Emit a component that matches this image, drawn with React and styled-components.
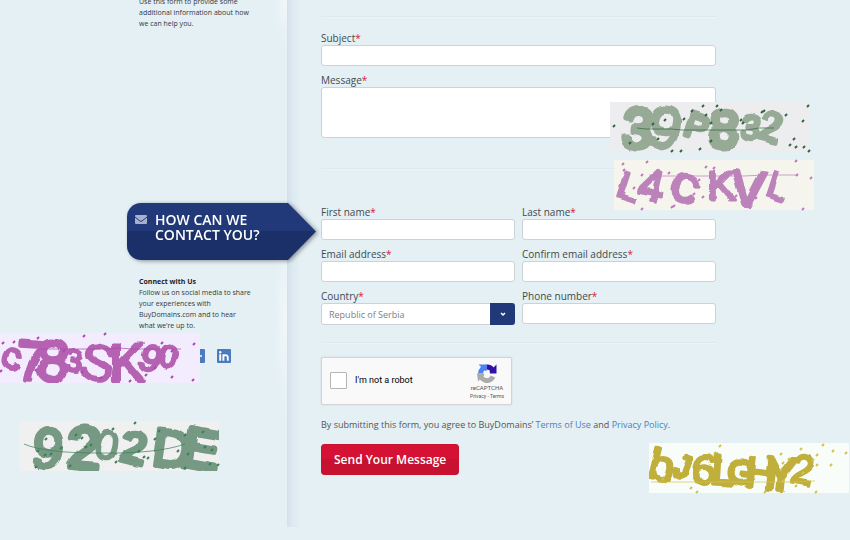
import React from "react";
import styled, { createGlobalStyle } from "styled-components";

const GlobalStyle = createGlobalStyle`
  * { box-sizing: border-box; }
  body {
    margin: 0;
    background: #e4f0f4;
    color: #555;
    font-family: "Open Sans", "Noto Sans", sans-serif;
    font-size: 10px;
  }
`;

const Page = styled.div`
  position: relative;
  min-height: 100vh;
  overflow: hidden;
`;
const Container = styled.div`
  display: grid;
  grid-template-columns: 160px 1fr;
  max-width: 596px;
  margin: 0 auto;
`;
const Sidebar = styled.aside`
  display: flex;
  flex-direction: column;
  background:
    radial-gradient(ellipse at 100% 0, #f2f7f9, transparent 70%) right 0 / 14px 46px no-repeat,
    radial-gradient(ellipse at 100% 50%, #f2f7f9, transparent 70%) right 220px / 14px 200px no-repeat;
`;
const Note = styled.p`
  margin: ${(p) => p.$margin};
  font-size: 7px;
  line-height: 11px;
  color: #33393d;
`;
const Strong = styled.strong`
  display: block;
  color: #222;
`;
const BannerShadow = styled.div`
  margin: 174px -29px 16px 0;
  filter: drop-shadow(2px 1px 2px rgba(0, 0, 0, 0.4));
`;
const Banner = styled.h2`
  display: flex;
  gap: 8px;
  height: 57px;
  margin: 0;
  padding: 9px 30px 0 8px;
  border-radius: 14px 0 0 14px;
  background: linear-gradient(#223979 50%, #1b2f68 50%);
  clip-path: polygon(0 0, calc(100% - 28px) 0, 100% 50%, calc(100% - 28px) 100%, 0 100%);
  color: #fff;
  font-size: 14px;
  font-weight: 600;
  line-height: 15px;
  white-space: nowrap;
`;
const Envelope = styled.svg`
  flex: none;
  width: 12px;
  height: 9px;
  margin-top: 3px;
`;
const Social = styled.nav`
  display: flex;
  gap: 12px;
  margin: 18px 0 0 64px;
`;
const SocialLink = styled.a`
  display: block;
  height: 14px;
`;
const Main = styled.main`
  padding: 16px 7px 65px 34px;
  background: linear-gradient(90deg, #d3e0eb, #dde9f1 5px, transparent 14px) 0 0 / 20px 527px no-repeat;
`;
const Rule = styled.hr`
  height: 2px;
  margin: ${(p) => p.$margin};
  border: 0;
  border-top: 1px solid #dfe9ed;
  border-bottom: 1px solid #edf4f6;
`;
const Fields = styled.div`
  display: grid;
  grid-template-columns: repeat(${(p) => p.$columns}, 1fr);
  gap: 7px;
`;
const Field = styled.div`
  display: flex;
  flex-direction: column;
`;
const Label = styled.label`
  font-size: 10px;
  line-height: 14px;
  color: #434a4e;
`;
const Required = styled.span`
  color: #d8173c;
`;
const Input = styled.input`
  width: 100%;
  height: 21px;
  padding: 0 7px;
  border: 1px solid #ccd2d5;
  border-radius: 3px;
  background: #fff;
  font: inherit;
`;
const TextArea = styled.textarea`
  height: 51px;
  padding: 4px 7px;
  border: 1px solid #ccd2d5;
  border-radius: 3px;
  background: #fff;
  font: inherit;
  resize: none;
`;
const SelectBox = styled.div`
  display: grid;
  grid-template-columns: 1fr 25px;
  height: 22px;
`;
const Select = styled.select`
  grid-area: 1 / 1 / 2 / 3;
  appearance: none;
  padding: 0 30px 0 7px;
  border: 1px solid #ccd2d5;
  border-radius: 3px;
  background: #fff;
  color: #808080;
  font: inherit;
  font-size: 9px;
`;
const SelectArrow = styled.span`
  grid-area: 1 / 2 / 2 / 3;
  display: grid;
  place-items: center;
  border-radius: 0 3px 3px 0;
  background: #223979;
  pointer-events: none;
`;
const Captcha = styled.div`
  display: flex;
  align-items: center;
  width: 191px;
  height: 48px;
  padding: 0 7px 2px 8px;
  border: 1px solid #d3d3d3;
  border-radius: 2px;
  background: #f9f9f9;
  box-shadow: 0 0 2px rgba(0, 0, 0, 0.1);
  font-family: Roboto, sans-serif;
`;
const Check = styled.input`
  appearance: none;
  width: 17px;
  height: 17px;
  margin: 0 8px 0 0;
  border: 1px solid #b5b5b5;
  border-radius: 1px;
  background: #fff;
`;
const CheckLabel = styled.label`
  flex: 1;
  font-size: 9px;
  color: #000;
`;
const Brand = styled.div`
  display: flex;
  flex-direction: column;
  align-items: center;
  padding-top: 2px;
  font-size: 6px;
  line-height: 8px;
  color: #555;
`;
const Small = styled.small`
  font-size: 5px;
`;
const Terms = styled.p`
  margin: 13px 0 12px;
  font-size: 9px;
  line-height: 14px;
`;
const TextLink = styled.a`
  color: #4a7fc4;
  text-decoration: none;
`;
const Send = styled.button`
  height: 31px;
  padding: 0 12px;
  border: 1px solid #c9122f;
  border-radius: 3px;
  background: linear-gradient(#d51234 50%, #c61230 50%);
  color: #fff;
  font: inherit;
  font-size: 12px;
  font-weight: 600;
`;
const Scrawl = styled.svg`
  position: absolute;
  left: ${(p) => p.$left}px;
  top: ${(p) => p.$top}px;
  width: 200px;
  height: 50px;
  overflow: visible;
  font-family: "Liberation Sans", sans-serif;
  text-anchor: middle;
`;

/* marks: [character, centre x, baseline, size, rotation, brush width] */
const scrawls = [
  {
    id: "purple", left: 0, top: 333, bg: "#f3ecfe", ink: "#b562b3", dot: "#ad48a8",
    line: "M38 16H110l8-1 15 1h48",
    marks: [["c", 12, 36, 38, 14, 3], ["7", 32, 48, 56, 4, 4], ["8", 53, 48, 58, 3, 4], ["3", 74, 38, 31, 8, 3], ["S", 98, 48, 52, 14, 2], ["K", 127, 48, 54, 0, 3], ["9", 151, 39, 38, 22, 3], ["0", 169, 34, 30, 16, 3]],
    dots: [[3, 10], [14, 9], [1, 38], [36, 37], [38, 5], [64, 18], [84, 3], [82, 39], [101, 45], [105, 1], [130, 48], [146, 42], [155, 35], [162, 10], [172, 18], [172, 44], [194, 11], [193, 47]],
  },
  {
    id: "forest", left: 19, top: 421, bg: "#f0f0f0", ink: "#759983", dot: "#3d7d58",
    line: "M5 23Q26 32 78 32 138 33 166 23",
    marks: [["9", 29, 47, 56, 9, 4], ["2", 65, 47, 58, 5, 6], ["0", 88, 39, 42, 11, 2], ["2", 115, 42, 44, 14, 5], ["D", 153, 46, 52, 8, 4], ["E", 182, 47, 55, 10, 6]],
    dots: [[17, 46], [19, 30], [26, 34], [27, 18], [32, 33], [42, 27], [57, 14], [63, 17], [67, 26], [72, 24], [51, 45], [94, 8], [97, 41], [116, 2], [120, 30], [125, 36], [129, 37], [136, 18], [140, 10], [159, 30], [166, 14], [169, 33], [166, 47], [184, 11], [186, 26], [193, 29], [191, 43], [199, 44]],
  },
  {
    id: "sage", left: 610, top: 102, bg: "#ededf0", ink: "#96aa96", dot: "#2f6738",
    line: "M27 26 35 27H61l11 1h65l12-2h15",
    marks: [["3", 28, 46, 56, 7, 6], ["9", 55, 46, 58, 14, 4], ["P", 87, 36, 34, 18, 5], ["8", 114, 45, 52, 5, 6], ["3", 141, 37, 33, 8, 4], ["2", 161, 39, 41, 14, 4]],
    dots: [[4, 24], [20, 41], [43, 22], [48, 37], [55, 18], [62, 49], [71, 49], [74, 17], [82, 9], [90, 47], [93, 4], [96, 13], [101, 21], [101, 39], [107, 4], [111, 8], [131, 18], [133, 21], [152, 10], [154, 9], [176, 13], [180, 43], [184, 37], [186, 45], [193, 19], [194, 45], [198, 4], [199, 49]],
  },
  {
    id: "mauve", left: 614, top: 160, bg: "#f6f5ed", ink: "#bb83b9", dot: "#c07abc",
    line: "M35 15 45 16H130l20-1h32",
    marks: [["L", 15, 40, 38, 18, 3], ["4", 38, 41, 46, 12, 3], ["C", 71, 41, 38, 25, 4], ["K", 107, 40, 42, 0, 3], ["V", 134, 46, 50, 6, 4], ["L", 164, 39, 36, 18, 3]],
    dots: [[9, 4], [10, 10], [33, 2], [28, 49], [28, 15], [20, 28], [37, 30], [55, 13], [58, 47], [60, 46], [80, 34], [82, 27], [85, 20], [89, 37], [92, 7], [100, 8], [122, 36], [142, 34], [142, 38], [182, 1], [183, 15], [189, 49], [197, 18]],
  },
  {
    id: "gold", left: 649, top: 443, bg: "#f9fdf9", ink: "#c1af3b", dot: "#d0c250",
    line: "M2 39H150l8-1h8",
    marks: [["b", 13, 38, 44, 14, 3], ["J", 34, 34, 31, 20, 4], ["6", 55, 41, 41, 7, 3], ["L", 74, 41, 41, 4, 4], ["G", 92, 41, 34, 8, 4], ["H", 112, 45, 42, 7, 4], ["Y", 132, 48, 48, 5, 4], ["2", 154, 41, 41, 10, 3]],
    dots: [[14, 36], [42, 45], [48, 49], [66, 10], [71, 3], [116, 49], [132, 11], [132, 27], [134, 20], [134, 38], [140, 16], [147, 43], [152, 6], [154, 30], [164, 17], [168, 12], [168, 22], [174, 2], [184, 8], [182, 22], [197, 10], [167, 49]],
  },
];

function ScrawlCard({ id, left, top, bg, ink, dot, line, marks, dots }) {
  return (
    <Scrawl $left={left} $top={top} viewBox="0 0 200 50">
      <filter id={id} x="0" y="0" width="200" height="50" filterUnits="userSpaceOnUse">
        <feTurbulence type="fractalNoise" baseFrequency="0.07" numOctaves="1" seed="4" result="noise" />
        <feDisplacementMap in="SourceGraphic" in2="noise" scale="6" xChannelSelector="R" yChannelSelector="G" result="rough" />
        <feGaussianBlur in="rough" stdDeviation="0.5" />
      </filter>
      <rect width="200" height="50" fill={bg} />
      <g filter={`url(#${id})`} fill={ink} stroke={ink} strokeLinejoin="round">
        {marks.map(([char, x, y, size, turn, brush], i) => (
          <text key={i} x={x} y={y} fontSize={size} strokeWidth={brush} transform={`rotate(${turn} ${x} ${y - size * 0.36})`}>
            {char}
          </text>
        ))}
      </g>
      <path d={line} fill="none" stroke={dot} strokeOpacity="0.7" />
      <path d={dots.map(([x, y]) => `M${x - 1} ${y + 1}l2-2`).join("")} stroke={dot} strokeWidth="2" />
    </Scrawl>
  );
}

function LabeledField({ id, text, children }) {
  return (
    <Field>
      <Label htmlFor={id}>{text}<Required>*</Required></Label>
      {children || <Input id={id} type="text" />}
    </Field>
  );
}

export default function App() {
  return (
    <Page>
      <GlobalStyle />
      <Container>
        <Sidebar>
          <Note $margin="-4px 35px 0 12px">
            Use this form to provide some additional information about how we can help you.
          </Note>
          <BannerShadow>
            <Banner>
              <Envelope viewBox="0 0 12 9">
                <rect width="12" height="9" rx="1" fill="#a7b1cf" />
                <path d="M0 2 5 6q1 .8 2 0l5-4" fill="none" stroke="#223979" strokeWidth="1" />
              </Envelope>
              <span>HOW CAN WE<br />CONTACT YOU?</span>
            </Banner>
          </BannerShadow>
          <Note $margin="0 35px 0 12px">
            <Strong>Connect with Us</Strong>
            Follow us on social media to share your experiences with BuyDomains.com and to hear what we’re up to.
          </Note>
          <Social>
            <SocialLink href="#plus" aria-label="Plus">
              <svg width="14" height="14" viewBox="0 0 14 14">
                <rect width="14" height="14" rx="1" fill="#4b7bbf" />
                <path d="M9 7h2M10 6v2" stroke="#fff" />
              </svg>
            </SocialLink>
            <SocialLink href="#in" aria-label="LinkedIn">
              <svg width="14" height="14" viewBox="0 0 14 14">
                <rect width="14" height="14" rx="1" fill="#4b7bbf" />
                <circle cx="3.200" cy="3.200" r="1.200" fill="#fff" />
                <path d="M3.200 5.300v6.400M6.400 5.300v6.400M6.400 8.500c0-3 4.400-3.200 4.400 0v3.200" fill="none" stroke="#fff" strokeWidth="1.900" />
              </svg>
            </SocialLink>
          </Social>
        </Sidebar>
        <Main>
          <form onSubmit={(e) => e.preventDefault()}>
            <Rule $margin="0 0 13px" />
            <Fields $columns={1}>
              <LabeledField id="subject" text="Subject" />
              <LabeledField id="message" text="Message"><TextArea id="message" /></LabeledField>
            </Fields>
            <Rule $margin="30px 0 35px" />
            <Fields $columns={2}>
              <LabeledField id="first" text="First name" />
              <LabeledField id="last" text="Last name" />
              <LabeledField id="email" text="Email address" />
              <LabeledField id="confirm" text="Confirm email address" />
              <LabeledField id="country" text="Country">
                <SelectBox>
                  <Select id="country"><option>Republic of Serbia</option></Select>
                  <SelectArrow>
                    <svg width="8" height="6" viewBox="0 0 8 6">
                      <path d="M2 2l2 2 2-2" fill="none" stroke="#fff" strokeWidth="1.500" />
                    </svg>
                  </SelectArrow>
                </SelectBox>
              </LabeledField>
              <LabeledField id="phone" text="Phone number" />
            </Fields>
            <Rule $margin="17px 0 13px" />
            <Captcha>
              <Check id="robot" type="checkbox" />
              <CheckLabel htmlFor="robot">I'm not a robot</CheckLabel>
              <Brand>
                <svg width="20" height="21" viewBox="0 0 20 20">
                  <path d="M10 3.500A6.500 6.500 0 0 1 15.500 6.500" fill="none" stroke="#3510a8" strokeWidth="5" />
                  <path d="M19.500 1v9h-9z" fill="#3510a8" />
                  <path d="M3.500 10A6.500 6.500 0 0 1 10 3.500" fill="none" stroke="#4d82f3" strokeWidth="5" />
                  <path d="M1.500 1H10v8z" fill="#4d82f3" />
                  <path d="M16 13A6.500 6.500 0 0 1 3.500 10" fill="none" stroke="#ababab" strokeWidth="5" />
                  <path d="M0 10h9l-8 8z" fill="#ababab" />
                  <circle cx="10" cy="10" r="3" fill="#f9f9f9" />
                </svg>
                <span>reCAPTCHA</span>
                <Small>Privacy - Terms</Small>
              </Brand>
            </Captcha>
            <Terms>
              By submitting this form, you agree to BuyDomains’ <TextLink href="#terms">Terms of Use</TextLink> and{" "}
              <TextLink href="#privacy">Privacy Policy</TextLink>.
            </Terms>
            <Send type="submit">Send Your Message</Send>
          </form>
        </Main>
      </Container>
      {scrawls.map((card) => <ScrawlCard key={card.id} {...card} />)}
    </Page>
  );
}
